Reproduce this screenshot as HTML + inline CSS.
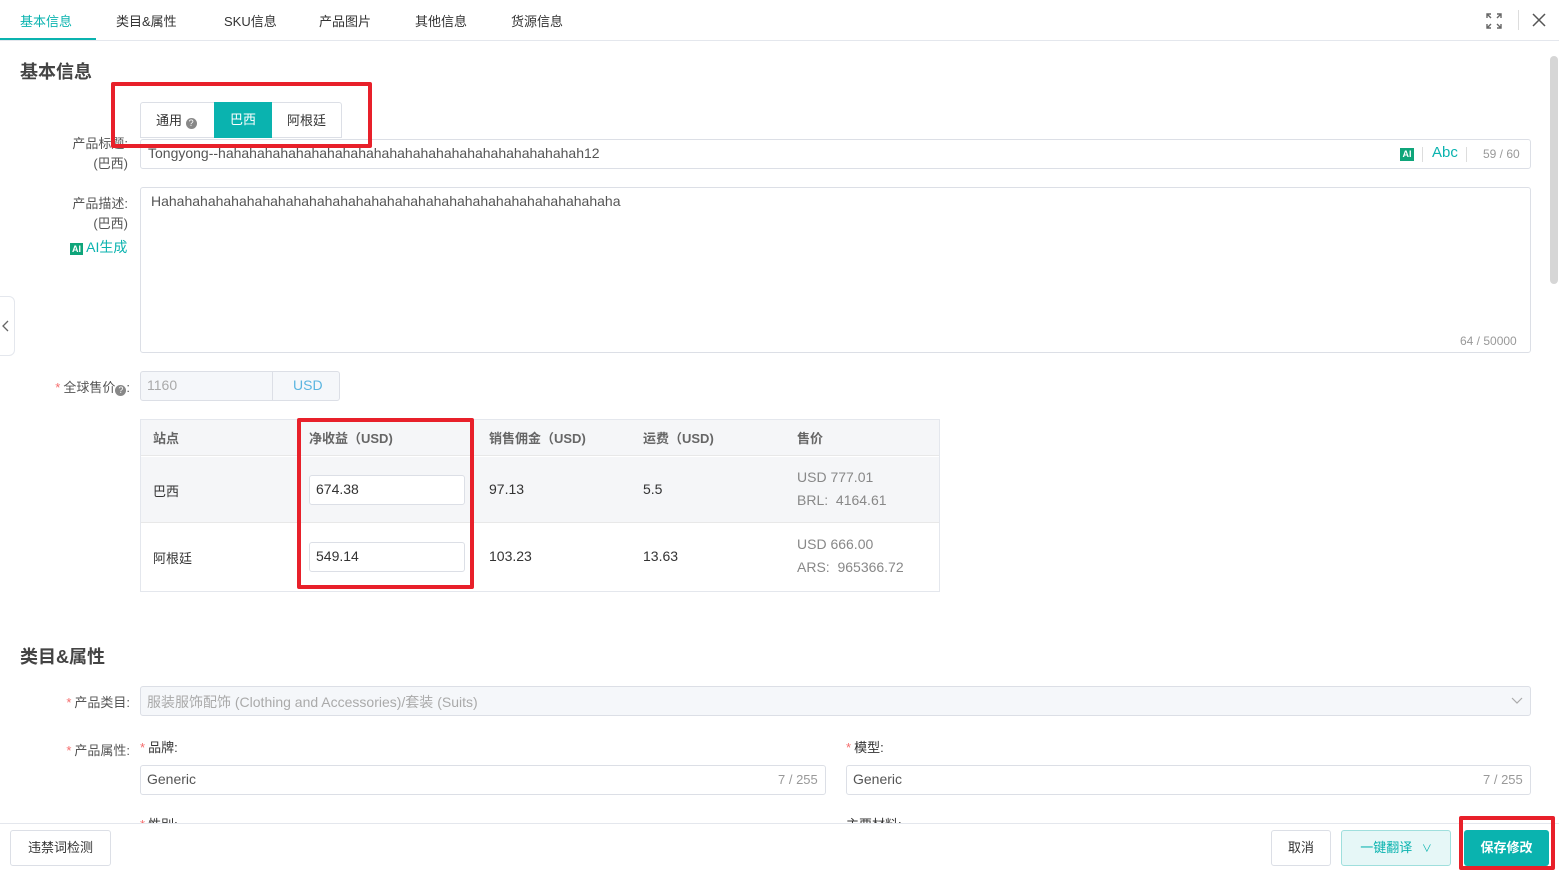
<!DOCTYPE html>
<html><head><meta charset="utf-8"><style>
*{box-sizing:border-box;margin:0;padding:0}
body{width:1559px;height:870px;overflow:hidden;background:#fff;font-family:"Liberation Sans","Noto Sans CJK SC",sans-serif;font-size:13px;color:#333;position:relative}
.a{position:absolute;white-space:nowrap}
.tab{top:11px;font-size:13px;color:#333}
.lbl{color:#555;text-align:right;font-size:13px}
.box{position:absolute;border:1px solid #dcdfe6;border-radius:3px;background:#fff}
.req{color:#f56c6c;margin-right:3px}
.red{position:absolute;border:4px solid #e8202a;border-radius:2px;z-index:10}
.th{position:absolute;top:428px;font-weight:bold;color:#666}
.gray{color:#999}
.t14{font-size:14px}
</style></head><body>
<!-- top tabs -->
<div class="a tab" style="left:20px;color:#0ab3af">基本信息</div>
<div class="a tab" style="left:116px">类目&amp;属性</div>
<div class="a tab" style="left:224px">SKU信息</div>
<div class="a tab" style="left:319px">产品图片</div>
<div class="a tab" style="left:415px">其他信息</div>
<div class="a tab" style="left:511px">货源信息</div>
<div class="a" style="left:0;top:38px;width:96px;height:2px;background:#0ab3af"></div>
<div class="a" style="left:0;top:40px;width:1559px;height:1px;background:#e4e7ed"></div>
<svg class="a" style="left:1485px;top:12px" width="18" height="18" viewBox="0 0 18 18" fill="none" stroke="#666" stroke-width="1.4"><path d="M2 6V2h4M2 2l4 4M16 6V2h-4M16 2l-4 4M2 12v4h4M2 16l4-4M16 12v4h-4M16 16l-4-4"/></svg>
<div class="a" style="left:1518px;top:10px;width:1px;height:20px;background:#ddd"></div>
<svg class="a" style="left:1531px;top:12px" width="16" height="16" viewBox="0 0 16 16" stroke="#555" stroke-width="1.5"><path d="M2 2l12 12M14 2L2 14"/></svg>
<!-- scrollbar -->
<div class="a" style="left:1550px;top:56px;width:8px;height:228px;background:#d6d6d6;border-radius:4px"></div>
<!-- left collapse handle -->
<div class="a" style="left:-6px;top:296px;width:21px;height:60px;border:1px solid #e4e7ed;border-radius:0 6px 6px 0;background:#fff"></div>
<svg class="a" style="left:2px;top:320px" width="8" height="12" viewBox="0 0 8 12" fill="none" stroke="#666" stroke-width="1.3"><path d="M6 1L1 6l5 5"/></svg>

<div class="a" style="left:20px;top:58px;font-size:18px;font-weight:bold;color:#444">基本信息</div>
<!-- lang tabs -->
<div class="box" style="left:140px;top:102px;width:202px;height:36px;border-radius:3px 3px 0 0"></div>
<div class="a" style="left:156px;top:110px">通用 <span style="display:inline-block;width:11px;height:11px;border-radius:50%;background:#888;color:#fff;font-size:9px;text-align:center;line-height:11px;vertical-align:-1px">?</span></div>
<div class="a" style="left:214px;top:102px;width:58px;height:36px;background:#0ab3af;color:#fff;text-align:center;line-height:35px">巴西</div>
<div class="a" style="left:287px;top:110px">阿根廷</div>

<!-- title -->
<div class="a lbl" style="left:60px;top:133px;width:68px">产品标题:</div>
<div class="a lbl" style="left:60px;top:153px;width:68px">(巴西)</div>
<div class="box" style="left:140px;top:139px;width:1391px;height:30px"></div>
<div class="a t14" style="left:148px;top:145px;color:#555">Tongyong--hahahahahahahahahahahahahahahahahahahahahahahah12</div>
<div class="a" style="left:1400px;top:148px;width:14px;height:13px;background:#0fa57a;color:#fff;font-size:9px;font-weight:bold;text-align:center;line-height:13px">AI</div>
<div class="a" style="left:1422px;top:147px;width:1px;height:15px;background:#ddd"></div>
<div class="a" style="left:1432px;top:144px;color:#0ab3af;font-size:15px">Abc</div>
<div class="a" style="left:1466px;top:147px;width:1px;height:15px;background:#ddd"></div>
<div class="a gray" style="left:1483px;top:147px;font-size:12px">59 / 60</div>
<div class="red" style="left:111px;top:82px;width:261px;height:66px"></div>

<!-- desc -->
<div class="a lbl" style="left:60px;top:193px;width:68px">产品描述:</div>
<div class="a lbl" style="left:60px;top:213px;width:68px">(巴西)</div>
<div class="a" style="left:70px;top:237px;color:#0ab3af;font-size:14px"><span style="display:inline-block;width:13px;height:12px;background:#0fa57a;color:#fff;font-size:9px;font-weight:bold;text-align:center;line-height:12px;vertical-align:0">AI</span> AI生成</div>
<div class="box" style="left:140px;top:187px;width:1391px;height:166px"></div>
<div class="a t14" style="left:151px;top:193px;color:#555">Hahahahahahahahahahahahahahahahahahahahahahahahahahahahahaha</div>
<div class="a gray" style="left:1460px;top:334px;font-size:12px">64 / 50000</div>

<!-- global price -->
<div class="a lbl" style="left:40px;top:377px;width:90px"><span class="req">*</span>全球售价<span style="display:inline-block;width:11px;height:11px;border-radius:50%;background:#888;color:#fff;font-size:9px;text-align:center;line-height:11px;vertical-align:-1px">?</span>:</div>
<div class="box" style="left:140px;top:371px;width:200px;height:30px;background:#f5f7fa"></div>
<div class="a" style="left:272px;top:372px;width:1px;height:28px;background:#dcdfe6"></div>
<div class="a t14" style="left:147px;top:377px;color:#aaa">1160</div>
<div class="a t14" style="left:293px;top:377px;color:#5bb5e0">USD</div>

<!-- table -->
<div class="a" style="left:140px;top:419px;width:800px;height:173px;border:1px solid #e4e7ed"></div>
<div class="a" style="left:141px;top:420px;width:798px;height:36px;background:#f5f6f8;border-bottom:1px solid #e8e8e8"></div>
<div class="a" style="left:141px;top:457px;width:798px;height:66px;background:#f5f6f8;border-bottom:1px solid #e8e8e8"></div>
<div class="th" style="left:153px">站点</div>
<div class="th" style="left:309px">净收益（USD)</div>
<div class="th" style="left:489px">销售佣金（USD)</div>
<div class="th" style="left:643px">运费（USD)</div>
<div class="th" style="left:797px">售价</div>
<div class="a" style="left:153px;top:481px">巴西</div>
<div class="box" style="left:309px;top:475px;width:156px;height:30px"></div>
<div class="a t14" style="left:316px;top:481px">674.38</div>
<div class="a t14" style="left:489px;top:481px">97.13</div>
<div class="a t14" style="left:643px;top:481px">5.5</div>
<div class="a t14" style="left:797px;top:469px;color:#888">USD 777.01</div>
<div class="a t14" style="left:797px;top:492px;color:#888">BRL:&nbsp;&nbsp;4164.61</div>
<div class="a" style="left:153px;top:548px">阿根廷</div>
<div class="box" style="left:309px;top:542px;width:156px;height:30px"></div>
<div class="a t14" style="left:316px;top:548px">549.14</div>
<div class="a t14" style="left:489px;top:548px">103.23</div>
<div class="a t14" style="left:643px;top:548px">13.63</div>
<div class="a t14" style="left:797px;top:536px;color:#888">USD 666.00</div>
<div class="a t14" style="left:797px;top:559px;color:#888">ARS:&nbsp;&nbsp;965366.72</div>
<div class="red" style="left:297px;top:418px;width:177px;height:171px"></div>

<!-- category -->
<div class="a" style="left:20px;top:643px;font-size:18px;font-weight:bold;color:#444">类目&amp;属性</div>
<div class="a lbl" style="left:40px;top:692px;width:90px"><span class="req">*</span>产品类目:</div>
<div class="box" style="left:140px;top:686px;width:1391px;height:30px;background:#f5f7fa"></div>
<div class="a t14" style="left:147px;top:692px;color:#aaa">服装服饰配饰 (Clothing and Accessories)/套装 (Suits)</div>
<svg class="a" style="left:1511px;top:697px" width="12" height="8" viewBox="0 0 12 8" fill="none" stroke="#aaa" stroke-width="1.2"><path d="M1 1l5 5 5-5"/></svg>
<div class="a lbl" style="left:40px;top:740px;width:90px"><span class="req">*</span>产品属性:</div>
<div class="a" style="left:140px;top:737px"><span class="req">*</span>品牌:</div>
<div class="a" style="left:846px;top:737px"><span class="req">*</span>模型:</div>
<div class="box" style="left:140px;top:765px;width:686px;height:30px"></div>
<div class="a t14" style="left:147px;top:771px;color:#555">Generic</div>
<div class="a gray" style="left:778px;top:772px;font-size:13px">7 / 255</div>
<div class="box" style="left:846px;top:765px;width:685px;height:30px"></div>
<div class="a t14" style="left:853px;top:771px;color:#555">Generic</div>
<div class="a gray" style="left:1483px;top:772px;font-size:13px">7 / 255</div>
<div class="a" style="left:140px;top:814px"><span class="req">*</span>性别:</div>
<div class="a" style="left:846px;top:814px">主要材料:</div>

<!-- footer -->
<div class="a" style="left:0;top:823px;width:1559px;height:47px;background:#fff;border-top:1px solid #e4e7ed"></div>
<div class="box" style="left:10px;top:830px;width:101px;height:36px;line-height:34px;text-align:center;color:#333">违禁词检测</div>
<div class="box" style="left:1271px;top:830px;width:60px;height:36px;line-height:34px;text-align:center;color:#333">取消</div>
<div class="box" style="left:1341px;top:830px;width:110px;height:36px;line-height:34px;text-align:center;color:#0ab3af;background:#e6f7f7;border-color:#9fdfdd">一键翻译 <span style="font-size:10px;margin-left:6px">&#8744;</span></div>
<div class="a" style="left:1464px;top:830px;width:85px;height:36px;line-height:36px;text-align:center;color:#fff;background:#0ab3af;border-radius:3px;font-weight:bold">保存修改</div>
<div class="red" style="left:1459px;top:816px;width:96px;height:54px"></div>
</body></html>
